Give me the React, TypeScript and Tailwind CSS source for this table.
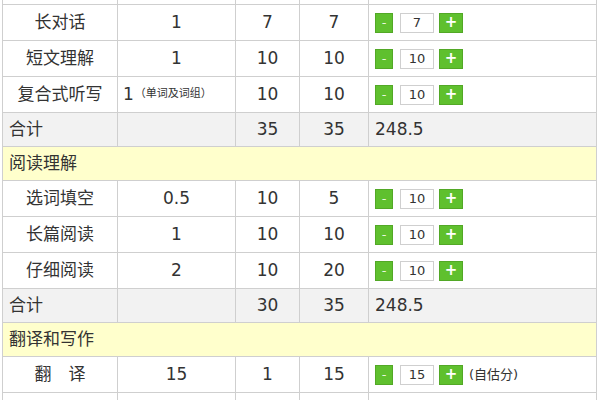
import React from "react";

type Item = { kind: "item"; name: string; a: React.ReactNode; b: string; c: string; v: string; note?: string };
type Sum = { kind: "sum"; b: string; c: string; total: string };
type Head = { kind: "head"; title: string };
type Blank = { kind: "blank" };
type Row = Item | Sum | Head | Blank;

const rows: Row[] = [
  { kind: "blank" },
  { kind: "item", name: "长对话", a: "1", b: "7", c: "7", v: "7" },
  { kind: "item", name: "短文理解", a: "1", b: "10", c: "10", v: "10" },
  {
    kind: "item",
    name: "复合式听写",
    a: (
      <span className="flex items-center">
        <span>1</span>
        <span className="text-[11px] ml-[1px]">（单词及词组）</span>
      </span>
    ),
    b: "10",
    c: "10",
    v: "10",
  },
  { kind: "sum", b: "35", c: "35", total: "248.5" },
  { kind: "head", title: "阅读理解" },
  { kind: "item", name: "选词填空", a: "0.5", b: "10", c: "5", v: "10" },
  { kind: "item", name: "长篇阅读", a: "1", b: "10", c: "10", v: "10" },
  { kind: "item", name: "仔细阅读", a: "2", b: "10", c: "20", v: "10" },
  { kind: "sum", b: "30", c: "35", total: "248.5" },
  { kind: "head", title: "翻译和写作" },
  { kind: "item", name: "翻　译", a: "15", b: "1", c: "15", v: "15", note: "(自估分)" },
  { kind: "blank" },
];

const cell = "border border-[#cfcfcf] p-0";

function Stepper({ v, note }: { v: string; note?: string }) {
  return (
    <div className="flex items-center pl-[6px]">
      <div className="w-[18px] h-[20px] bg-[#5fc02e] border border-[#52a826] text-[#e8f6df] text-[13px] leading-none flex items-center justify-center">
        -
      </div>
      <div className="ml-[7px] w-[34px] h-[20px] bg-white border border-[#cfcfcf] text-[13px] text-[#333] flex items-center justify-center leading-none">
        {v}
      </div>
      <div className="ml-[5px] w-[24px] h-[20px] bg-[#5fc02e] border border-[#52a826] text-white text-[15px] font-bold leading-none flex items-center justify-center">
        +
      </div>
      {note && <span className="ml-[6px] text-[13px] text-[#333]">{note}</span>}
    </div>
  );
}

export default function App() {
  return (
    <div
      className="w-[600px] h-[400px] overflow-hidden bg-white text-[#333]"
      style={{ fontFamily: "'DejaVu Sans', 'Noto Sans CJK SC', sans-serif" }}
    >
      <table className="mt-[-32px] ml-[2px] w-[595px] border-collapse table-fixed text-[17px]">
        <colgroup>
          <col className="w-[115px]" />
          <col className="w-[118px]" />
          <col className="w-[64px]" />
          <col className="w-[69px]" />
          <col />
        </colgroup>
        <tbody>
          {rows.map((r, i) => {
            if (r.kind === "blank") {
              return (
                <tr key={i} className="h-[36px] bg-white">
                  <td className={cell}></td>
                  <td className={cell}></td>
                  <td className={cell}></td>
                  <td className={cell}></td>
                  <td className={cell}>
                    <div className="flex items-center pl-[6px]">
                      <div className="w-[18px] h-[20px] bg-[#5fc02e]" />
                      <div className="ml-[7px] w-[34px] h-[20px] bg-white border border-[#cfcfcf]" />
                      <div className="ml-[5px] w-[24px] h-[20px] bg-[#5fc02e]" />
                    </div>
                  </td>
                </tr>
              );
            }
            if (r.kind === "head") {
              return (
                <tr key={i} className="h-[34px] bg-[#ffffcc]">
                  <td colSpan={5} className={`${cell} pl-[6px]`}>
                    {r.title}
                  </td>
                </tr>
              );
            }
            if (r.kind === "sum") {
              return (
                <tr key={i} className="h-[34px] bg-[#f2f2f2]">
                  <td className={`${cell} pl-[6px]`}>合计</td>
                  <td className={cell}></td>
                  <td className={`${cell} text-center`}>{r.b}</td>
                  <td className={`${cell} text-center`}>{r.c}</td>
                  <td className={`${cell} pl-[6px]`}>{r.total}</td>
                </tr>
              );
            }
            return (
              <tr key={i} className="h-[36px] bg-white">
                <td className={`${cell} text-center`}>{r.name}</td>
                <td className={`${cell} text-center`}>
                  {typeof r.a === "string" ? r.a : <div className="pl-[5px]">{r.a}</div>}
                </td>
                <td className={`${cell} text-center`}>{r.b}</td>
                <td className={`${cell} text-center`}>{r.c}</td>
                <td className={cell}>
                  <Stepper v={r.v} note={r.note} />
                </td>
              </tr>
            );
          })}
        </tbody>
      </table>
    </div>
  );
}
